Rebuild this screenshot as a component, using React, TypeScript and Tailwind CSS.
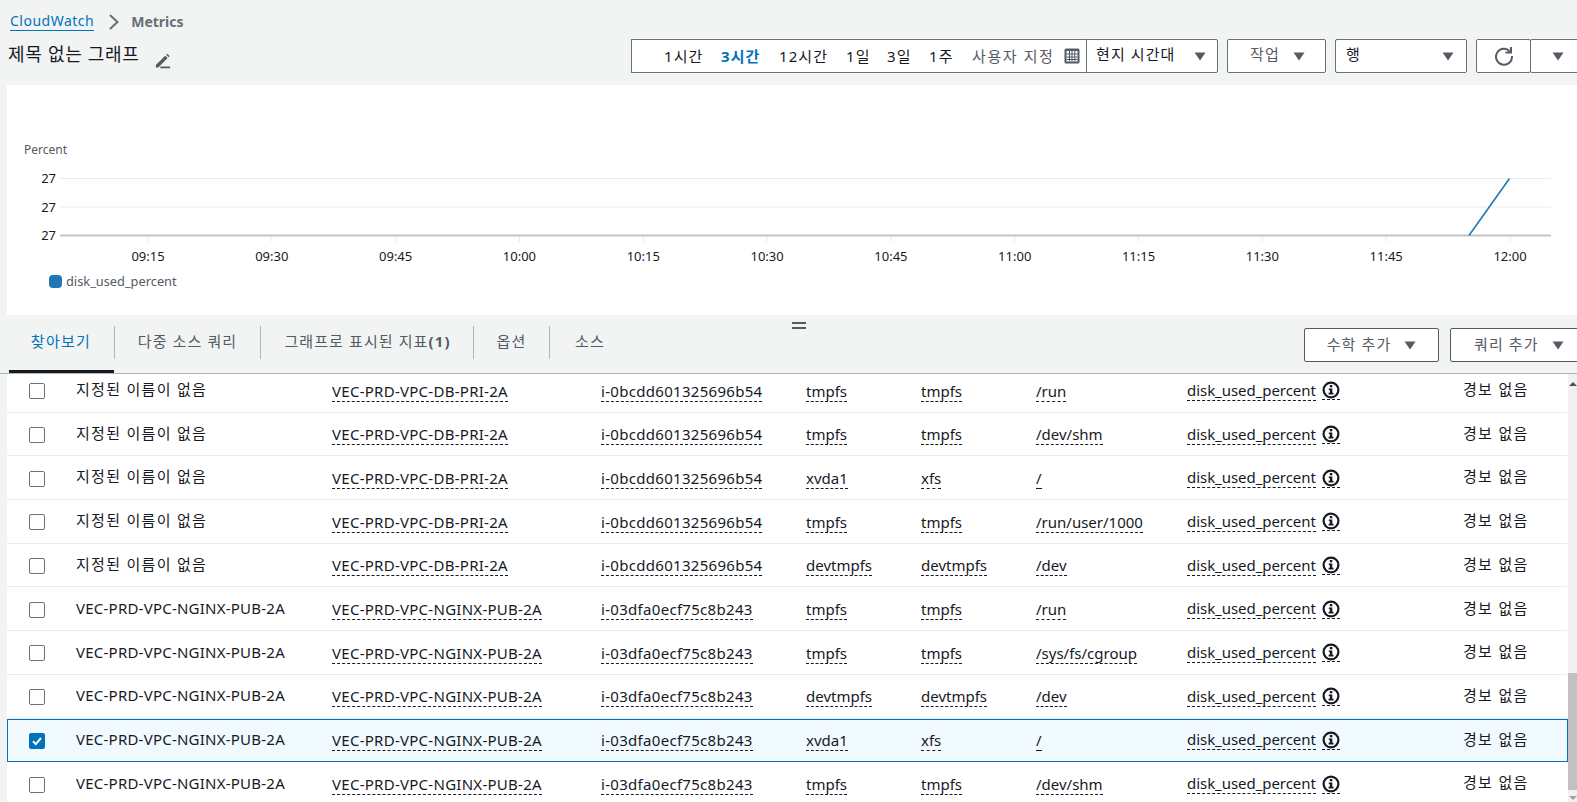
import React from "react";

const dbName = "지정된 이름이 없음";
const dbHost = "VEC-PRD-VPC-DB-PRI-2A";
const dbId = "i-0bcdd601325696b54";
const ngName = "VEC-PRD-VPC-NGINX-PUB-2A";
const ngId = "i-03dfa0ecf75c8b243";

const rows = [
  { name: dbName, host: dbHost, id: dbId, device: "tmpfs", fs: "tmpfs", path: "/run" },
  { name: dbName, host: dbHost, id: dbId, device: "tmpfs", fs: "tmpfs", path: "/dev/shm" },
  { name: dbName, host: dbHost, id: dbId, device: "xvda1", fs: "xfs", path: "/" },
  { name: dbName, host: dbHost, id: dbId, device: "tmpfs", fs: "tmpfs", path: "/run/user/1000" },
  { name: dbName, host: dbHost, id: dbId, device: "devtmpfs", fs: "devtmpfs", path: "/dev" },
  { name: ngName, host: ngName, id: ngId, device: "tmpfs", fs: "tmpfs", path: "/run" },
  { name: ngName, host: ngName, id: ngId, device: "tmpfs", fs: "tmpfs", path: "/sys/fs/cgroup" },
  { name: ngName, host: ngName, id: ngId, device: "devtmpfs", fs: "devtmpfs", path: "/dev" },
  { name: ngName, host: ngName, id: ngId, device: "xvda1", fs: "xfs", path: "/", checked: true },
  { name: ngName, host: ngName, id: ngId, device: "tmpfs", fs: "tmpfs", path: "/dev/shm" },
];

const times = ["09:15", "09:30", "09:45", "10:00", "10:15", "10:30", "10:45", "11:00", "11:15", "11:30", "11:45", "12:00"];

function Caret() {
  return (
    <svg width="12" height="9" viewBox="0 0 12 9" className="shrink-0">
      <path d="M0.5 0.5h11L6 8.5z" fill="#545b64" />
    </svg>
  );
}

function Dashed({ children, className }: { children: React.ReactNode; className?: string }) {
  return <span className={"border-b border-dashed border-[#16191f] leading-[19px] " + (className ?? "")}>{children}</span>;
}

function InfoIcon() {
  return (
    <svg width="18" height="18" viewBox="0 0 18 18" className="block">
      <circle cx="9" cy="9" r="7.4" fill="none" stroke="#16191f" strokeWidth="2.2" />
      <rect x="7.8" y="4" width="2.5" height="2.3" fill="#16191f" />
      <path d="M6.8 7.4h3.5v4.4h1.2v1.7H6.6v-1.7h1.2V9.1h-1z" fill="#16191f" />
    </svg>
  );
}

function Chart() {
  const first = 148;
  const step = (1510 - 148) / 11;
  return (
    <svg width="1570" height="230" className="block" style={{ fontFamily: '"Noto Sans", sans-serif' }}>
      <text x="17" y="69" fontSize="12" fill="#545b64">Percent</text>
      {[93, 122, 150].map((y) => (
        <text key={y} x="49" y={y + 5} fontSize="13" fill="#16191f" textAnchor="end">27</text>
      ))}
      <line x1="53" x2="1544" y1="93.5" y2="93.5" stroke="#eaeded" />
      <line x1="53" x2="1544" y1="122" y2="122" stroke="#eaeded" />
      {times.map((t, i) => {
        const x = first - 7 + i * step;
        return (
          <g key={t}>
            <line x1={x} x2={x} y1="150" y2="157" stroke="#eaeded" />
            <text x={x} y="176" fontSize="13" fill="#16191f" textAnchor="middle">{t}</text>
          </g>
        );
      })}
      <line x1="53" x2="1544" y1="150.5" y2="150.5" stroke="#c4c4c4" strokeWidth="2" />
      <path d="M1462 150.5L1502.5 93.5" stroke="#1f77b4" strokeWidth="1.6" fill="none" />
      <rect x="42" y="190" width="13" height="13" rx="4" fill="#1f77b4" />
      <text x="59" y="201" fontSize="12.8" fill="#545b64">disk_used_percent</text>
    </svg>
  );
}

export default function App() {
  return (
    <div
      className="relative w-[1577px] h-[802px] overflow-hidden bg-[#f2f3f3] text-[#16191f] text-[15px]"
      style={{ fontFamily: '"Noto Sans", "Noto Sans CJK KR", sans-serif' }}
    >
      {/* breadcrumb */}
      <div className="flex items-center h-[39px] pl-[10px] pt-[4px] text-[14px]">
        <span className="text-[#0073bb] border-b border-[#0073bb] leading-[18px] tracking-[0.5px]">CloudWatch</span>
        <svg width="12" height="18" viewBox="0 0 12 18" className="ml-[14px]">
          <path d="M2 2l7.5 7-7.5 7" fill="none" stroke="#687078" strokeWidth="2" />
        </svg>
        <span className="ml-[11px] font-bold text-[#687078]">Metrics</span>
      </div>

      {/* title + time controls */}
      <div className="flex h-[34px] pl-[8px]">
        <div className="flex items-start w-[623px] shrink-0">
          <span className="text-[18px] leading-[28px] mt-[1px] tracking-[0.7px]">제목 없는 그래프</span>
          <svg width="16" height="16" viewBox="0 0 18 18" className="ml-[15px] mt-[14px]">
            <path d="M1 13.5L11.5 3l2.7 2.7L3.7 16.2H1z" fill="#545b64" />
            <path d="M12.6 2l1.2-1.2 2.7 2.7-1.2 1.2z" fill="#545b64" />
            <rect x="6" y="15.2" width="11" height="2" fill="#545b64" />
          </svg>
        </div>
        <div className="flex items-center w-[456px] shrink-0 border border-[#687078] bg-white pl-[32px] tracking-[1.1px]">
          <span className="w-[57px]">1시간</span>
          <span className="w-[58px] font-bold text-[#0073bb]">3시간</span>
          <span className="w-[67px]">12시간</span>
          <span className="w-[41px]">1일</span>
          <span className="w-[42px]">3일</span>
          <span className="w-[43px]">1주</span>
          <span className="w-[92px] text-[#545b64] tracking-[1.6px] whitespace-nowrap">사용자 지정</span>
          <svg width="16" height="16" viewBox="0 0 16 16" className="shrink-0">
            <rect x="0.5" y="0.5" width="15" height="15" rx="1.5" fill="#545b64" />
            <rect x="2.5" y="3" width="11" height="10.5" fill="#ffffff" />
            <path d="M2.5 6h11M2.5 9h11M2.5 11.5h11M5.5 3v10.5M8 3v10.5M10.8 3v10.5" stroke="#545b64" strokeWidth="1" fill="none" />
          </svg>
        </div>
        <div className="flex items-center justify-between w-[132px] shrink-0 -ml-px border border-[#687078] rounded-r-[2px] bg-white pl-[9px] pr-[11px] tracking-[1.1px]">
          <span className="-mt-[3px]">현지 시간대</span>
          <Caret />
        </div>
        <div className="flex items-center w-[99px] shrink-0 ml-[9px] border border-[#687078] rounded-[2px] bg-white pl-[22px] text-[#545b64] tracking-[1.1px]">
          <span className="-mt-[3px] w-[43px]">작업</span>
          <Caret />
        </div>
        <div className="flex items-center justify-between w-[132px] shrink-0 ml-[9px] border border-[#687078] rounded-[2px] bg-white pl-[10px] pr-[12px]">
          <span className="-mt-[3px]">행</span>
          <Caret />
        </div>
        <div className="flex items-center justify-center w-[55px] shrink-0 ml-[9px] border border-[#687078] rounded-[2px] bg-white">
          <svg width="20" height="20" viewBox="0 0 20 20">
            <path d="M15.8 5.2A8 8 0 1 0 18 10" fill="none" stroke="#545b64" strokeWidth="2" />
            <path d="M17 1v5.5h-5.5" fill="none" stroke="#545b64" strokeWidth="2" />
          </svg>
        </div>
        <div className="flex items-center w-[60px] shrink-0 -ml-px border border-[#687078] rounded-[2px] bg-white pl-[21px]">
          <Caret />
        </div>
      </div>

      {/* graph */}
      <div className="ml-[7px] mt-[12px] h-[230px] bg-white">
        <Chart />
      </div>

      {/* tabs */}
      <div className="relative flex items-start h-[59px] border-b border-[#aab7b8] text-[#545b64] tracking-[1.1px]">
        <div className="absolute left-[792px] top-[7px] w-[14px]">
          <div className="h-[2px] bg-[#545b64]" />
          <div className="mt-[3px] h-[2px] bg-[#545b64]" />
        </div>
        <div className="flex h-[58px] w-[105px] shrink-0 items-start justify-center ml-[9px] pr-[1px] pt-[15px] border-b-[3px] border-[#16191f] text-[#0073bb] tracking-[1.3px]">
          찾아보기
        </div>
        <div className="flex items-center justify-center w-[147px] shrink-0 h-[33px] mt-[11px] pb-[3px] border-x border-[#aab7b8]">다중 소스 쿼리</div>
        <div className="flex items-center justify-center w-[212px] shrink-0 h-[33px] mt-[11px] pb-[3px] pl-[1px]">
          <span>그래프로 표시된 지표<b>(1)</b></span>
        </div>
        <div className="flex items-center justify-center w-[77px] shrink-0 h-[33px] mt-[11px] pb-[3px] border-x border-[#aab7b8]">옵션</div>
        <div className="flex items-center justify-center w-[80px] shrink-0 h-[33px] mt-[11px] pb-[3px]">소스</div>
        <div className="flex items-center justify-center gap-[13px] w-[135px] h-[34px] mt-[13px] ml-[674px] border border-[#545b64] rounded-[2px] bg-white shrink-0">
          <span className="-mt-[1px]">수학 추가</span>
          <Caret />
        </div>
        <div className="flex items-center gap-[13px] w-[140px] h-[34px] mt-[13px] ml-[11px] pl-[23px] border border-[#545b64] rounded-[2px] bg-white shrink-0">
          <span className="-mt-[1px]">쿼리 추가</span>
          <Caret />
        </div>
      </div>

      {/* metric table, scrolled a few px into its first row */}
      <div className="flex">
        <div className="ml-[7px] w-[1561px] bg-white h-[429px] overflow-hidden">
          <div className="-mt-[5px]">
            {rows.map((r, i) => (
              <div
                key={i}
                className={
                  "grid grid-cols-[68px_256px_269px_205px_115px_115px_151px_276px_1fr] items-center h-[43.7px] border " +
                  (r.checked ? "border-[#0073bb] bg-[#f1faff]" : "border-transparent border-b-[#eaeded]")
                }
              >
                <div className="pl-[21px]">
                  {r.checked ? (
                    <div className="flex items-center justify-center w-[16px] h-[16px] mt-[1px] rounded-[2px] bg-[#0073bb]">
                      <svg width="12" height="12" viewBox="0 0 12 12">
                        <path d="M2 6.3l2.8 2.8L10 3" fill="none" stroke="#ffffff" strokeWidth="2" />
                      </svg>
                    </div>
                  ) : (
                    <div className="w-[16px] h-[16px] mt-[1px] border border-[#687078] rounded-[2px] bg-white" />
                  )}
                </div>
                <div className={"whitespace-nowrap " + (i < 5 ? "-mt-[3px] tracking-[1.3px]" : "-mt-[2px] tracking-[0.23px]")}>{r.name}</div>
                <div className="whitespace-nowrap"><Dashed className="tracking-[0.27px]">{r.host}</Dashed></div>
                <div className="whitespace-nowrap"><Dashed className="tracking-[0.3px]">{r.id}</Dashed></div>
                <div><Dashed>{r.device}</Dashed></div>
                <div><Dashed>{r.fs}</Dashed></div>
                <div><Dashed>{r.path}</Dashed></div>
                <div className="flex items-center gap-[6px]">
                  <Dashed className="tracking-[-0.05px]">disk_used_percent</Dashed>
                  <span className="border-b border-dashed border-[#16191f]"><InfoIcon /></span>
                </div>
                <div className="-mt-[3px] tracking-[1.3px]">경보 없음</div>
              </div>
            ))}
          </div>
        </div>
        <div className="relative w-[9px] h-[429px] bg-[#f1f1f1]">
          <div className="absolute left-[1px] top-[8px] w-0 h-0 border-x-[4px] border-x-transparent border-b-[4px] border-b-[#505050]" />
          <div className="absolute inset-x-0 top-[299px] h-[117px] bg-[#c1c1c1]" />
          <div className="absolute left-[1px] top-[422px] w-0 h-0 border-x-[4px] border-x-transparent border-t-[4px] border-t-[#a0a0a0]" />
        </div>
      </div>
    </div>
  );
}
